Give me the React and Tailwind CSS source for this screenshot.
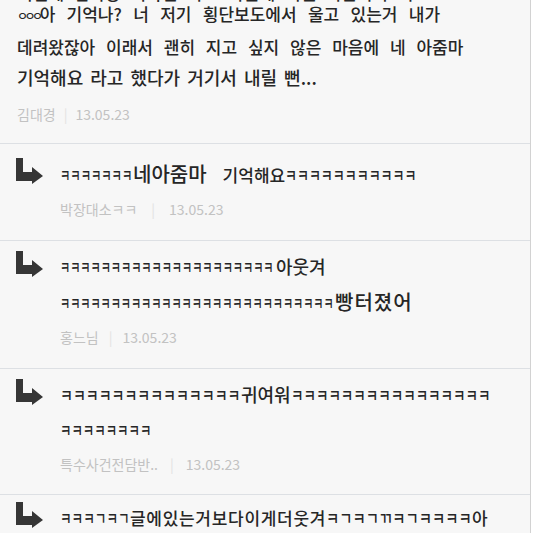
import React from "react";

function Arrow() {
  return (
    <svg width="27" height="26" viewBox="0 0 27 26" className="block">
      <path d="M0 0H7V14H16V9L27 18L16 26V23H0Z" fill="#363636" />
    </svg>
  );
}

function Meta({ name, gap = "mx-[8px]" }) {
  return (
    <div className="h-[34px] flex items-center whitespace-nowrap text-[14px] font-normal text-[#c2c2c2]">
      <span>{name}</span>
      <span className={`${gap} text-[#e2e2e2]`}>|</span>
      <span>13.05.23</span>
    </div>
  );
}

/* a run of ㅋ squeezed horizontally: outer span holds the layout width, inner span is scaled */
function K({ w, s, children }) {
  return (
    <span className={`inline-block align-baseline ${w}`}>
      <span className={`inline-block origin-left ${s}`}>{children}</span>
    </span>
  );
}

function Reply({ pad, children, meta }) {
  return (
    <div className={`border-t border-[#dde0e4] flex ${pad}`}>
      <div className="w-[60px] shrink-0 pl-[16px]">
        <div className="h-[35px] flex items-center pb-[5px]">
          <Arrow />
        </div>
      </div>
      <div className="flex-1 min-w-0">
        <div className="text-[17px] font-medium leading-[35px] text-[#262626] whitespace-nowrap">{children}</div>
        {meta}
      </div>
    </div>
  );
}

export default function App() {
  return (
    <div className="w-[533px] h-[533px] overflow-hidden bg-white flex font-['Noto_Sans_CJK_KR','Noto_Sans',sans-serif]">
      <div className="w-[531px] shrink-0 h-full bg-[#f7f7f7] border-r border-[#d2d2d2]">
        {/* main comment */}
        <div className="px-[17px] pb-[12px]">
          <div className="-mt-[20px] h-[18px] leading-[26px] text-[17px] font-medium text-[#262626] whitespace-nowrap [word-spacing:6px]">
            어릴때 엄마랑 지하철 타고 가는데 어떤 아줌마가 나보고
          </div>
          <div className="text-[17px] font-medium leading-[31px] text-[#262626] whitespace-nowrap">
            <div className="[word-spacing:7.5px]">
              <span className="text-[12px] tracking-[-3.5px]">ㅇㅇㅇ</span>아 기억나? 너 저기 횡단보도에서 울고 있는거 내가
            </div>
            <div className="[word-spacing:7px]">데려왔잖아 이래서 괜히 지고 싶지 않은 마음에 네 아줌마</div>
            <div className="text-[18px] [word-spacing:3px]">기억해요 라고 했다가 거기서 내릴 뻔...</div>
          </div>
          <div className="mt-[4px]">
            <Meta name="김대경" />
          </div>
        </div>

        {/* reply 1 */}
        <Reply pad="pt-[12px] pb-[14px]" meta={<Meta name="박장대소ㅋㅋ" gap="mx-[14px]" />}>
          <div>
            <K w="w-[73px]" s="scale-x-[0.66]">ㅋㅋㅋㅋㅋㅋㅋ</K>
            <span className="text-[20px]">네아줌마</span>
            <span className="ml-[16px]">기억해요</span>
            <K w="w-[132px]" s="scale-x-[0.764]">ㅋㅋㅋㅋㅋㅋㅋㅋㅋㅋㅋ</K>
          </div>
        </Reply>

        {/* reply 2 */}
        <Reply pad="pt-[8px] pb-[14px]" meta={<Meta name="홍느님" gap="mx-[10px]" />}>
          <div>
            <K w="w-[216px]" s="scale-x-[0.65]">ㅋㅋㅋㅋㅋㅋㅋㅋㅋㅋㅋㅋㅋㅋㅋㅋㅋㅋㅋㅋㅋ</K>
            <span className="text-[18px]">아웃겨</span>
          </div>
          <div>
            <K w="w-[275px]" s="scale-x-[0.648]">ㅋㅋㅋㅋㅋㅋㅋㅋㅋㅋㅋㅋㅋㅋㅋㅋㅋㅋㅋㅋㅋㅋㅋㅋㅋㅋㅋ</K>
            <span className="text-[20px] tracking-[1px]">빵터졌어</span>
          </div>
        </Reply>

        {/* reply 3 */}
        <Reply pad="pt-[8px] pb-[13px]" meta={<Meta name="특수사건전담반.." gap="mx-[12px]" />}>
          <div>
            <K w="w-[181px]" s="scale-x-[0.824]">ㅋㅋㅋㅋㅋㅋㅋㅋㅋㅋㅋㅋㅋㅋ</K>
            <span className="text-[18px]">귀여워</span>
            <K w="w-[200px]" s="scale-x-[0.797]">ㅋㅋㅋㅋㅋㅋㅋㅋㅋㅋㅋㅋㅋㅋㅋㅋ</K>
          </div>
          <div>
            <K w="w-[92px]" s="scale-x-[0.73]">ㅋㅋㅋㅋㅋㅋㅋㅋ</K>
          </div>
        </Reply>

        {/* reply 4 */}
        <Reply pad="pt-[5px]" meta={null}>
          <div>
            <K w="w-[70px]" s="scale-x-[0.742]">ㅋㅋㅋㄱㅋㄱ</K>
            <span className="tracking-[0.7px]">글에있는거보다이게더웃겨</span>
            <K w="w-[146px]" s="scale-x-[0.847]">ㅋㄱㅋㄱㄲㅋㄱㅋㅋㅋㅋ</K>
            <span>아</span>
          </div>
        </Reply>
      </div>
      <div className="flex-1 bg-white" />
    </div>
  );
}
